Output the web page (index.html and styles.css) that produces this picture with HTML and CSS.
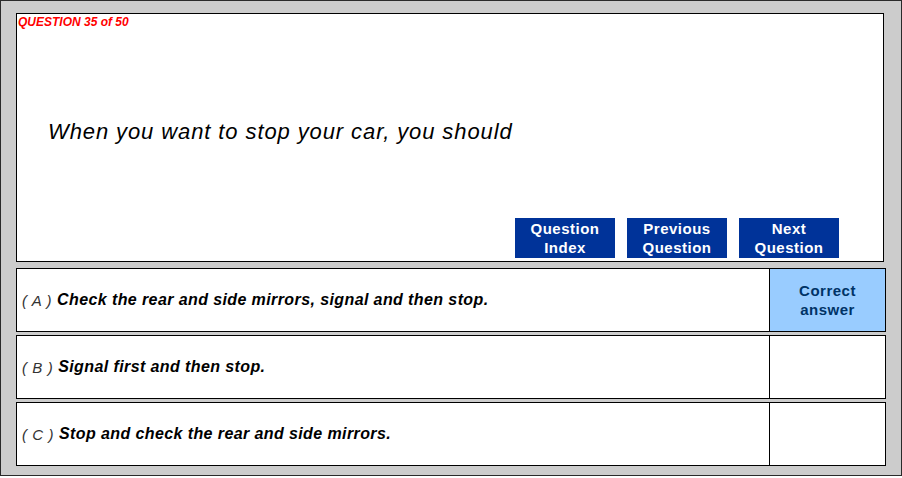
FILE: index.html
```html
<!DOCTYPE html>
<html>
<head>
<meta charset="utf-8">
<link rel="stylesheet" href="styles.css">
</head>
<body>
<div class="frame">
  <div class="question-box">
    <div class="counter">QUESTION 35 of 50</div>
    <div class="question-text">When you want to stop your car, you should</div>
    <div class="nav">
      <a class="nav-btn">Question<br>Index</a>
      <a class="nav-btn">Previous<br>Question</a>
      <a class="nav-btn">Next<br>Question</a>
    </div>
  </div>
  <div class="answers">
    <div class="answer">
      <div class="answer-text"><span class="label">( A )</span> Check the rear and side mirrors, signal and then stop.</div>
      <div class="answer-mark correct">Correct<br>answer</div>
    </div>
    <div class="answer">
      <div class="answer-text"><span class="label">( B )</span> Signal first and then stop.</div>
      <div class="answer-mark"></div>
    </div>
    <div class="answer">
      <div class="answer-text"><span class="label">( C )</span> Stop and check the rear and side mirrors.</div>
      <div class="answer-mark"></div>
    </div>
  </div>
</div>
</body>
</html>
```

FILE: styles.css
```css
* { box-sizing: border-box; }
html, body {
  margin: 0;
  padding: 0;
  background: #fff;
  font-family: "Liberation Sans", Arial, sans-serif;
}
.frame {
  width: 902px;
  height: 476px;
  background: #cccccc;
  border: 1px solid #2a2a2a;
  padding: 12px 0 0 15px;
}
.question-box {
  width: 868px;
  height: 249px;
  background: #fff;
  border: 1px solid #000;
  display: flex;
  flex-direction: column;
  padding: 2px 0 0 1px;
}
.counter {
  color: #ff0000;
  font-size: 12px;
  font-weight: bold;
  font-style: italic;
  letter-spacing: 0;
  line-height: 13px;
}
.question-text {
  margin: 90px 0 0 30px;
  font-size: 22px;
  font-style: italic;
  letter-spacing: 0.9px;
  line-height: 26px;
  color: #000;
}
.nav {
  margin-top: auto;
  display: flex;
  justify-content: flex-end;
  gap: 12px;
  padding: 0 44px 3px 0;
}
.nav-btn {
  width: 100px;
  height: 40px;
  background: #003399;
  color: #fff;
  font-size: 15px;
  font-weight: bold;
  letter-spacing: 0.5px;
  line-height: 19px;
  text-align: center;
  padding-top: 1px;
}
.answers {
  margin-top: 6px;
  display: flex;
  flex-direction: column;
  gap: 3px;
}
.answer {
  width: 870px;
  height: 64px;
  background: #fff;
  border: 1px solid #000;
  display: flex;
}
.answer-text {
  flex: 1;
  display: flex;
  align-items: center;
  padding-left: 5px;
  font-size: 16px;
  font-weight: bold;
  font-style: italic;
  letter-spacing: 0.4px;
  color: #000;
  white-space: pre;
}
.label {
  font-weight: normal;
  color: #333;
  font-size: 15px;
  letter-spacing: 0.6px;
}
.answer-mark {
  width: 116px;
  border-left: 1px solid #000;
  display: flex;
  align-items: center;
  justify-content: center;
  text-align: center;
}
.answer-mark.correct {
  background: #99ccff;
  color: #003366;
  font-size: 15px;
  font-weight: bold;
  letter-spacing: 0.5px;
  line-height: 19px;
}
```
